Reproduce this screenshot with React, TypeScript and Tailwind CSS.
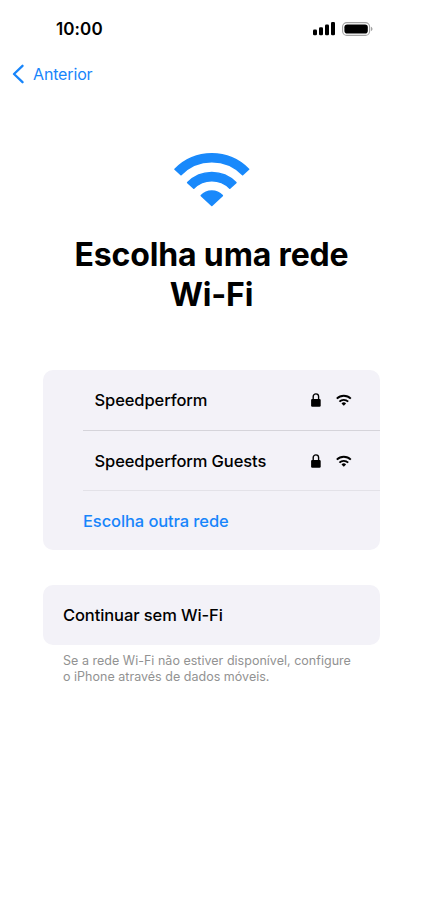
type Network = {
  id: string;
  name: string;
};

const networks: Network[] = [
  { id: "main", name: "Speedperform" },
  { id: "guests", name: "Speedperform Guests" }
];

function WifiIcon({ className }: { className?: string }) {
  return (
    <svg viewBox="0 0 76 56" fill="currentColor" stroke="currentColor" strokeWidth="1.6" strokeLinejoin="round" className={className}>
      <path d="M1 17.2A51.5 51.5 0 0 1 74.6 17.2L68.6 22.6A43 43 0 0 0 7 22.6Z" />
      <path d="M13.7 30.6A33.8 33.8 0 0 1 61.9 30.6L55.8 36.2A25.5 25.5 0 0 0 19.8 36.2Z" />
      <path d="M27.3 43.6A14.2 14.2 0 0 1 48.3 43.6L37.8 53.4Z" />
    </svg>
  );
}

function SmallWifiIcon() {
  return (
    <svg viewBox="0 0 16 12" fill="none" stroke="currentColor" strokeWidth="1.9" className="h-3 w-4">
      <path d="M0.8 4.7a9.9 9.9 0 0 1 14 0" />
      <path d="M3.4 7.7a6.2 6.2 0 0 1 8.8 0" />
      <path d="M5.5 9.4a3.3 3.3 0 0 1 4.6 0L7.8 11.7Z" fill="currentColor" stroke="none" />
    </svg>
  );
}

function LockIcon() {
  return (
    <svg viewBox="0 0 10 14" className="h-3.5 w-2.5">
      <rect x="0.1" y="5.9" width="9.6" height="7.8" rx="1.2" fill="currentColor" />
      <path d="M2.2 6.5V3.6a2.7 2.7 0 0 1 5.4 0v2.9" fill="none" stroke="currentColor" strokeWidth="1.4" />
    </svg>
  );
}

function StatusBar() {
  return (
    <div className="flex h-[58px] items-center justify-between pr-[50px] pl-[56px]">
      <span className="text-[17px] leading-5 font-semibold tracking-[0.1px]">10:00</span>
      <div className="mb-px flex items-center gap-[7px]">
        <svg viewBox="0 0 22 14" fill="currentColor" className="h-3.5 w-[22px]">
          <rect x="0" y="7.6" width="4" height="5.6" rx="1.2" />
          <rect x="6" y="5.2" width="4" height="8" rx="1.2" />
          <rect x="12" y="2.6" width="4" height="10.6" rx="1.2" />
          <rect x="18" y="0" width="4" height="13.2" rx="1.2" />
        </svg>
        <svg viewBox="0 0 31 14" className="h-3.5 w-[31px]">
          <rect x="0.6" y="0.6" width="27" height="12.8" rx="4.2" fill="none" stroke="#a3a3a3" strokeWidth="1.1" />
          <rect x="2.4" y="2.4" width="23.4" height="9.2" rx="2.8" fill="currentColor" />
          <path d="M28.9 4.8v4.4c1-.4 1.6-1.2 1.6-2.2s-.6-1.8-1.6-2.2Z" fill="#a3a3a3" />
        </svg>
      </div>
    </div>
  );
}

function NetworkRow({ name }: { name: string }) {
  return (
    <button type="button" className="flex h-full w-full items-center justify-between pr-7 pl-[11.5px] text-left">
      <span>{name}</span>
      <span className="flex items-center gap-[15px]">
        <LockIcon />
        <SmallWifiIcon />
      </span>
    </button>
  );
}

export default function App() {
  return (
    <div className="h-[917px] w-full overflow-hidden bg-white font-['Inter','Liberation_Sans',sans-serif] text-black">
      <StatusBar />
      <button type="button" className="flex h-8 items-center gap-[9px] pl-3 text-[16px] tracking-[-0.15px] text-[#1785fb]">
        <svg viewBox="0 0 12 20" fill="none" stroke="currentColor" strokeWidth="2.3" strokeLinecap="round" strokeLinejoin="round" className="h-5 w-3">
          <path d="M10.5 1.8 2 10l8.5 8.2" />
        </svg>
        Anterior
      </button>

      <header className="flex flex-col items-center pt-[62px]">
        <WifiIcon className="h-[56px] w-[76px] text-[#1989fb]" />
        <h1 className="mt-[27px] w-[300px] text-center text-[32px] leading-10 font-bold tracking-[-0.15px]">
          Escolha uma rede Wi-Fi
        </h1>
      </header>

      <main className="mt-[55px] px-[43px] text-[16.5px] leading-6 font-medium tracking-[-0.1px]">
        <section className="overflow-hidden rounded-[10px] bg-[#f3f2f8] pl-10">
          {networks.map((network, index) => (
            <div key={network.id} className={index === 0 ? "h-[61px] border-b border-[#d5d4da]" : "h-[60px] border-b border-[#e3e2e8]"}>
              <NetworkRow name={network.name} />
            </div>
          ))}
          <button type="button" className="flex h-[59px] w-full items-center text-[#1785fb]">
            Escolha outra rede
          </button>
        </section>

        <button type="button" className="mt-[35px] flex h-[60px] w-full items-center rounded-[10px] bg-[#f3f2f8] pl-5">
          Continuar sem Wi-Fi
        </button>
        <p className="mt-2 w-[310px] pl-5 text-[12.5px] leading-4 font-normal tracking-[0.02px] whitespace-nowrap text-[#929292]">
          Se a rede Wi-Fi não estiver disponível, configure
          <br />o iPhone através de dados móveis.
        </p>
      </main>
    </div>
  );
}
